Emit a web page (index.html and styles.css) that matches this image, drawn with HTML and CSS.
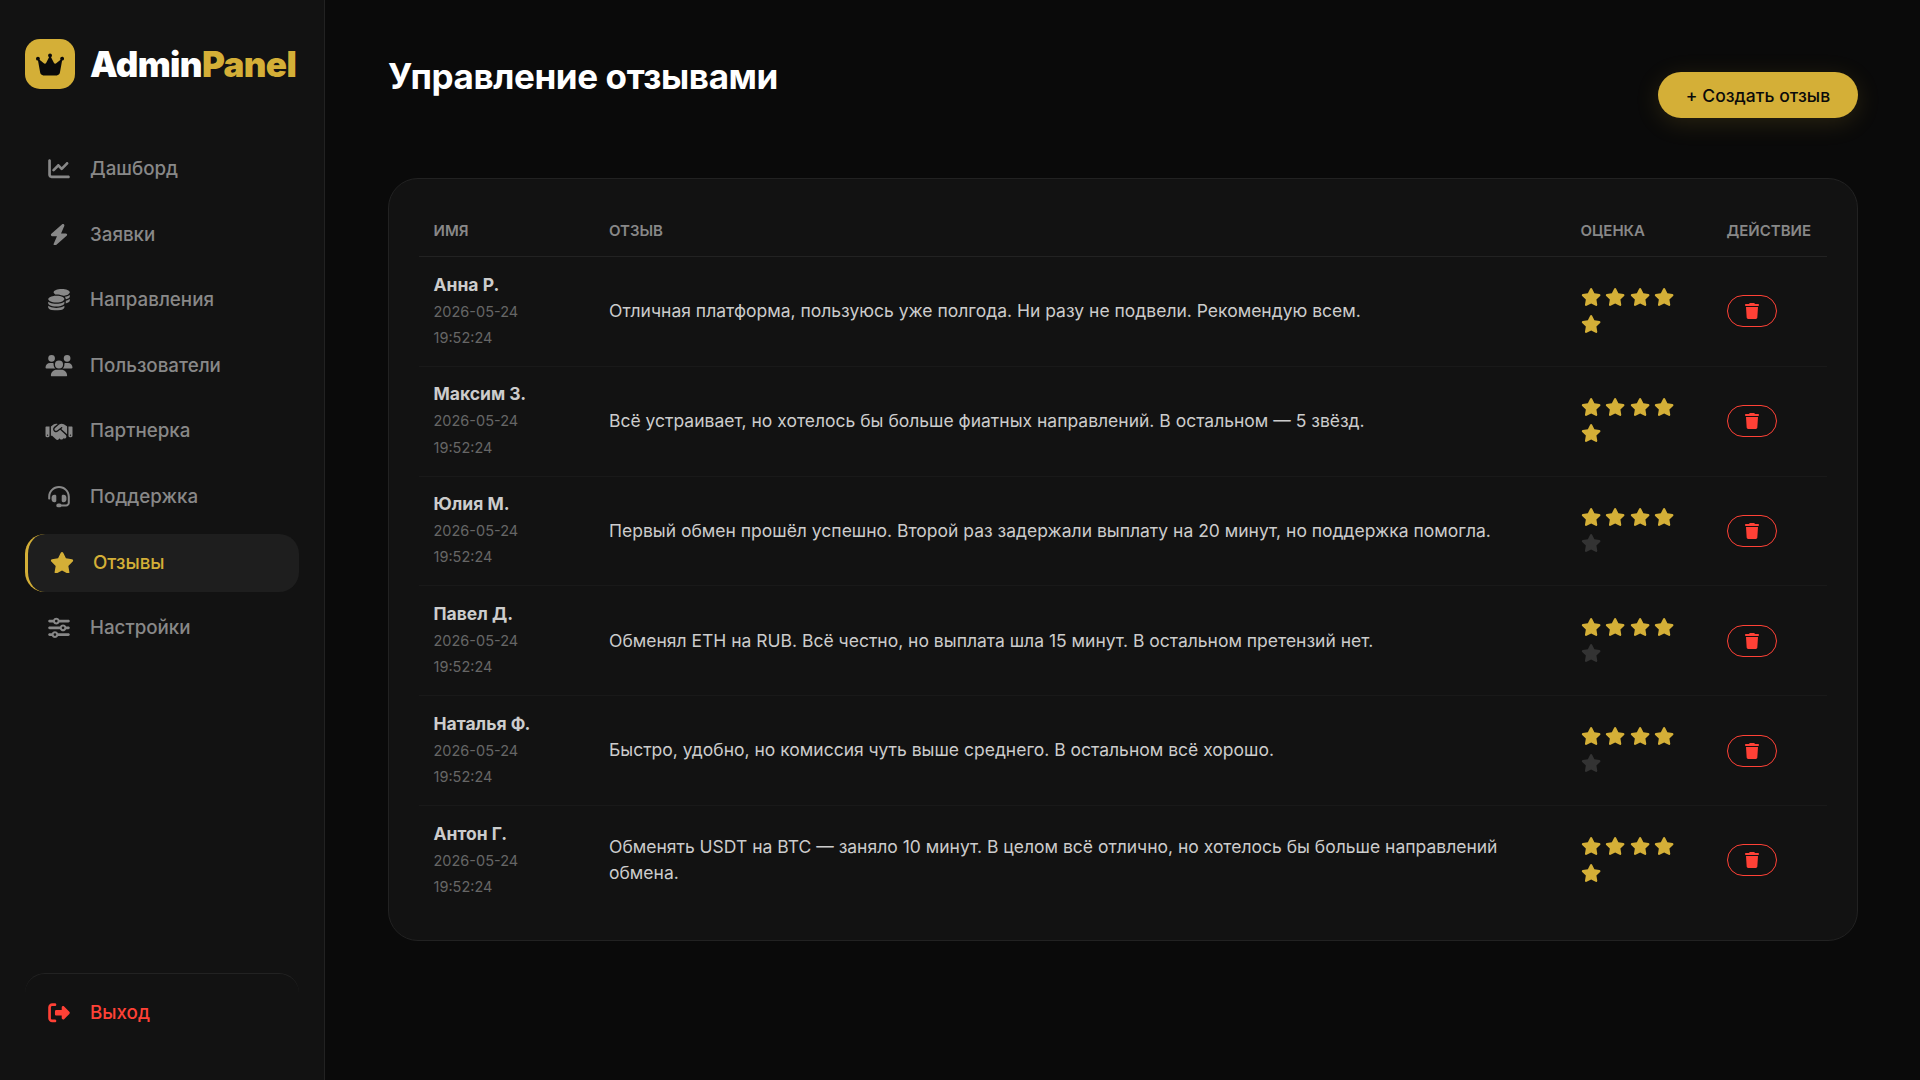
FILE: index.html
```html
<!DOCTYPE html>
<html lang="ru">
<head>
<meta charset="utf-8">
<title>AdminPanel</title>
<link rel="stylesheet" href="styles.css">
</head>
<body>
<svg class="sprite" aria-hidden="true">
  <symbol id="crown" viewBox="0 0 576 512"><path d="M309 106c11.4-7 19-19.7 19-34c0-22.1-17.9-40-40-40s-40 17.9-40 40c0 14.4 7.6 27 19 34L209.7 220.6c-9.1 18.2-32.7 23.4-48.6 10.7L72 160c5-6.7 8-15 8-24c0-22.1-17.9-40-40-40S0 113.9 0 136s17.9 40 40 40c.2 0 .5 0 .7 0L86.4 427.4c5.5 30.4 32 52.6 63 52.6H426.6c30.9 0 57.4-22.1 63-52.6L535.3 176c.2 0 .5 0 .7 0c22.1 0 40-17.9 40-40s-17.9-40-40-40s-40 17.9-40 40c0 9 3 17.3 8 24l-89.1 71.3c-15.9 12.7-39.5 7.5-48.6-10.7L309 106z"/></symbol>
  <symbol id="chart" viewBox="0 0 512 512"><path d="M64 64c0-17.7-14.3-32-32-32S0 46.3 0 64V400c0 44.2 35.8 80 80 80H480c17.7 0 32-14.3 32-32s-14.3-32-32-32H80c-8.8 0-16-7.2-16-16V64zm406.6 86.6c12.5-12.5 12.5-32.8 0-45.3s-32.8-12.5-45.3 0L320 210.7l-57.4-57.4c-12.5-12.5-32.8-12.5-45.3 0l-112 112c-12.5 12.5-12.5 32.8 0 45.3s32.8 12.5 45.3 0L240 221.3l57.4 57.4c12.5 12.5 32.8 12.5 45.3 0l128-128z"/></symbol>
  <symbol id="bolt" viewBox="0 0 448 512"><path d="M349.4 44.6c5.9-13.7 1.5-29.7-10.6-38.5s-28.6-8-39.9 1.8l-256 224c-10 8.8-13.6 22.9-8.9 35.3S50.7 288 64 288H175.5L98.6 467.4c-5.9 13.7-1.5 29.7 10.6 38.5s28.6 8 39.9-1.8l256-224c10-8.8 13.6-22.9 8.9-35.3s-16.6-20.7-30-20.7H272.5L349.4 44.6z"/></symbol>
  <symbol id="coins" viewBox="0 0 512 512"><path d="M512 80c0 18-14.3 34.6-38.4 48c-29.1 16.1-72.5 27.5-122.3 30.9c-3.7-1.8-7.4-3.5-11.3-5C300.6 137.4 248.2 128 192 128c-8.3 0-16.4 .2-24.5 .6l-1.1-.6C142.3 114.6 128 98 128 80c0-44.2 86-80 192-80S512 35.8 512 80zM160.7 161.1c10.2-.7 20.7-1.1 31.3-1.1c62.2 0 117.4 12.3 152.5 31.4C369.3 204.9 384 221.7 384 240c0 4-.7 7.9-2.1 11.7c-4.6 13.2-17 25.3-35 35.5c-.1 .1-.3 .1-.4 .2c-.3 .2-.6 .3-.9 .5c-35 19.4-90.8 32-153.6 32c-59.6 0-112.9-11.3-148.2-29.1c-1.9-.9-3.7-1.9-5.5-2.9C14.3 274.6 0 258 0 240c0-34.8 53.4-64.5 128-75.4c10.5-1.5 21.4-2.7 32.7-3.5zM416 240c0-21.9-10.6-39.9-24.1-53.4c28.3-4.4 54.2-11.4 76.2-20.5c16.3-6.8 31.5-15.2 43.9-25.5V176c0 19.3-16.5 37.1-43.8 50.9c-14.6 7.4-32.4 13.7-52.4 18.5c.1-1.8 .2-3.5 .2-5.3zm-32 96c0 18-14.3 34.6-38.4 48c-1.8 1-3.6 1.9-5.5 2.9C304.9 404.7 251.6 416 192 416c-62.8 0-118.6-12.6-153.6-32C14.3 370.6 0 354 0 336V300.6c12.5 10.3 27.6 18.7 43.9 25.5C83.4 342.6 135.8 352 192 352s108.6-9.4 148.1-25.9c7.8-3.2 15.3-6.9 22.4-10.9c6.1-3.4 11.8-7.2 17.2-11.2c1.5-1.1 2.9-2.3 4.3-3.4V304v5.7V336zm32 0V304 278.1c19-4.2 36.5-9.5 52.1-16c16.3-6.8 31.5-15.2 43.9-25.5V272c0 10.5-5 21-14.9 30.9c-16.3 16.3-45 29.7-81.3 38.4c.1-1.7 .2-3.5 .2-5.3zM192 448c56.2 0 108.6-9.4 148.1-25.9c16.3-6.8 31.5-15.2 43.9-25.5V432c0 44.2-86 80-192 80S0 476.2 0 432V396.6c12.5 10.3 27.6 18.7 43.9 25.5C83.4 438.6 135.8 448 192 448z"/></symbol>
  <symbol id="users" viewBox="0 0 640 512"><path d="M144 0a80 80 0 1 1 0 160A80 80 0 1 1 144 0zM512 0a80 80 0 1 1 0 160A80 80 0 1 1 512 0zM0 298.7C0 239.8 47.8 192 106.7 192h42.7c15.9 0 31 3.5 44.6 9.7c-1.3 7.2-1.9 14.7-1.9 22.3c0 38.2 16.8 72.5 43.3 96c-.2 0-.4 0-.7 0H21.3C9.6 320 0 310.4 0 298.7zM405.3 320c-.2 0-.4 0-.7 0c26.6-23.5 43.3-57.8 43.3-96c0-7.6-.7-15-1.9-22.3c13.6-6.3 28.7-9.7 44.6-9.7h42.7C592.2 192 640 239.8 640 298.7c0 11.8-9.6 21.3-21.3 21.3H405.3zM224 224a96 96 0 1 1 192 0 96 96 0 1 1 -192 0zM128 485.3C128 411.7 187.7 352 261.3 352H378.7C452.3 352 512 411.7 512 485.3c0 14.7-11.9 26.7-26.7 26.7H154.7c-14.7 0-26.7-11.9-26.7-26.7z"/></symbol>
  <symbol id="handshake" viewBox="0 0 640 512"><path d="M323.4 85.2l-96.8 78.4c-16.1 13-19.2 36.4-7 53.1c12.9 17.8 38 21.3 55.3 7.8l99.3-77.2c7-5.4 17-4.2 22.5 2.8s4.2 17-2.8 22.5l-20.9 16.2L512 316.8V128h-.7l-3.9-2.5L434.8 79c-15.3-9.8-33.2-15-51.4-15c-21.8 0-43 7.5-60 21.2zm22.8 124.4l-51.7 40.2C263 274.3 217.3 268 193.7 235.6c-22.2-30.5-16.6-73.1 12.7-96.8l83.2-67.3c-11.6-4.9-24.1-7.4-36.8-7.4C234 64 215.7 69.6 200 80l-72 48V352h28.2l91.4 83.4c19.6 17.9 49.9 16.5 67.8-3.1c5.5-6.1 9.2-13.2 11.1-20.6l17 15.6c19.5 17.9 49.9 16.6 67.8-2.9c4.5-4.9 7.8-10.6 9.9-16.5c19.4 13 45.8 10.3 62.1-7.5c17.9-19.5 16.6-49.9-2.9-67.8l-134.2-123zM16 128c-8.8 0-16 7.2-16 16V352c0 17.7 14.3 32 32 32H64c17.7 0 32-14.3 32-32V128H16zM48 320a16 16 0 1 1 0 32 16 16 0 1 1 0-32zM544 128V352c0 17.7 14.3 32 32 32h32c17.7 0 32-14.3 32-32V144c0-8.8-7.2-16-16-16H544zm32 208a16 16 0 1 1 32 0 16 16 0 1 1 -32 0z"/></symbol>
  <symbol id="headset" viewBox="0 0 512 512"><path d="M256 48C141.1 48 48 141.1 48 256v40c0 13.3-10.7 24-24 24s-24-10.7-24-24V256C0 114.6 114.6 0 256 0S512 114.6 512 256V400.1c0 48.6-39.4 88-88.1 88L313.6 488c-8.3 14.3-23.8 24-41.6 24H240c-26.5 0-48-21.5-48-48s21.5-48 48-48h32c17.8 0 33.3 9.7 41.6 24l110.4 .1c22.1 0 40-17.9 40-40V256c0-114.9-93.1-208-208-208zM144 208h16c17.7 0 32 14.3 32 32V352c0 17.7-14.3 32-32 32H144c-35.3 0-64-28.7-64-64V272c0-35.3 28.7-64 64-64zm224 0c35.3 0 64 28.7 64 64v48c0 35.3-28.7 64-64 64H352c-17.7 0-32-14.3-32-32V240c0-17.7 14.3-32 32-32h16z"/></symbol>
  <symbol id="star" viewBox="0 0 576 512"><path d="M316.9 18C311.6 7 300.4 0 288.1 0s-23.4 7-28.8 18L195 150.3 51.4 171.5c-12 1.8-22 10.2-25.7 21.7s-.7 24.2 7.9 32.7L137.8 329 113.2 474.7c-2 12 3 24.2 12.9 31.3s23 8 33.8 2.3l128.3-68.5 128.3 68.5c10.8 5.7 23.9 4.9 33.8-2.3s14.9-19.3 12.9-31.3L438.5 329 542.7 225.9c8.6-8.5 11.7-21.2 7.9-32.7s-13.7-19.9-25.7-21.7L381.2 150.3 316.9 18z"/></symbol>
  <symbol id="sliders" viewBox="0 0 512 512"><path d="M0 416c0 17.7 14.3 32 32 32l54.7 0c12.3 28.3 40.5 48 73.3 48s61-19.7 73.3-48L480 448c17.7 0 32-14.3 32-32s-14.3-32-32-32l-246.7 0c-12.3-28.3-40.5-48-73.3-48s-61 19.7-73.3 48L32 384c-17.7 0-32 14.3-32 32zm128 0a32 32 0 1 1 64 0 32 32 0 1 1 -64 0zM320 256a32 32 0 1 1 64 0 32 32 0 1 1 -64 0zm32-80c-32.8 0-61 19.7-73.3 48L32 224c-17.7 0-32 14.3-32 32s14.3 32 32 32l246.7 0c12.3 28.3 40.5 48 73.3 48s61-19.7 73.3-48l54.7 0c17.7 0 32-14.3 32-32s-14.3-32-32-32l-54.7 0c-12.3-28.3-40.5-48-73.3-48zM192 128a32 32 0 1 1 0-64 32 32 0 1 1 0 64zm73.3-64C253 35.7 224.8 16 192 16s-61 19.7-73.3 48L32 64C14.3 64 0 78.3 0 96s14.3 32 32 32l86.7 0c12.3 28.3 40.5 48 73.3 48s61-19.7 73.3-48L480 128c17.7 0 32-14.3 32-32s-14.3-32-32-32L265.3 64z"/></symbol>
  <symbol id="logout" viewBox="0 0 512 512"><path d="M377.9 105.9L500.7 228.7c7.2 7.2 11.3 17.1 11.3 27.3s-4.1 20.1-11.3 27.3L377.9 406.1c-6.4 6.4-15 9.9-24 9.9c-18.7 0-33.9-15.2-33.9-33.9l0-62.1-128 0c-17.7 0-32-14.3-32-32l0-64c0-17.7 14.3-32 32-32l128 0 0-62.1c0-18.7 15.2-33.9 33.9-33.9c9 0 17.6 3.6 24 9.9zM160 96L96 96c-17.7 0-32 14.3-32 32l0 256c0 17.7 14.3 32 32 32l64 0c17.7 0 32 14.3 32 32s-14.3 32-32 32l-64 0c-53 0-96-43-96-96L0 128C0 75 43 32 96 32l64 0c17.7 0 32 14.3 32 32s-14.3 32-32 32z"/></symbol>
  <symbol id="trash" viewBox="0 0 448 512"><path d="M135.2 17.7L128 32H32C14.3 32 0 46.3 0 64S14.3 96 32 96H416c17.7 0 32-14.3 32-32s-14.3-32-32-32H320l-7.2-14.3C307.4 6.8 296.3 0 284.2 0H163.8c-12.1 0-23.2 6.8-28.6 17.7zM416 128H32L53.2 467c1.6 25.3 22.6 45 47.9 45H346.9c25.3 0 46.3-19.7 47.9-45L416 128z"/></symbol>
</svg>

<div class="layout">
  <aside class="sidebar">
    <div class="logo">
      <div class="logo-mark"><svg><use href="#crown"/></svg></div>
      <div class="logo-text">Admin<span>Panel</span></div>
    </div>
    <nav class="nav">
      <a class="nav-item"><svg><use href="#chart"/></svg>Дашборд</a>
      <a class="nav-item"><svg><use href="#bolt"/></svg>Заявки</a>
      <a class="nav-item"><svg><use href="#coins"/></svg>Направления</a>
      <a class="nav-item"><svg><use href="#users"/></svg>Пользователи</a>
      <a class="nav-item"><svg><use href="#handshake"/></svg>Партнерка</a>
      <a class="nav-item"><svg><use href="#headset"/></svg>Поддержка</a>
      <a class="nav-item active"><svg><use href="#star"/></svg>Отзывы</a>
      <a class="nav-item"><svg><use href="#sliders"/></svg>Настройки</a>
    </nav>
    <a class="nav-item logout"><svg><use href="#logout"/></svg>Выход</a>
  </aside>

  <main class="main">
    <header class="header">
      <h1>Управление отзывами</h1>
      <button class="btn-create">+ Создать отзыв</button>
    </header>

    <section class="card">
      <table class="reviews">
        <colgroup><col class="c-name"><col class="c-text"><col class="c-rate"><col class="c-act"></colgroup>
        <thead>
          <tr><th>Имя</th><th>Отзыв</th><th>Оценка</th><th>Действие</th></tr>
        </thead>
        <tbody>
          <tr>
            <td><strong>Анна Р.</strong><small>2026-05-24 19:52:24</small></td>
            <td>Отличная платформа, пользуюсь уже полгода. Ни разу не подвели. Рекомендую всем.</td>
            <td><div class="stars"><svg><use href="#star"/></svg><svg><use href="#star"/></svg><svg><use href="#star"/></svg><svg><use href="#star"/></svg><svg><use href="#star"/></svg></div></td>
            <td><button class="btn-del"><svg><use href="#trash"/></svg></button></td>
          </tr>
          <tr>
            <td><strong>Максим З.</strong><small>2026-05-24 19:52:24</small></td>
            <td>Всё устраивает, но хотелось бы больше фиатных направлений. В остальном — 5 звёзд.</td>
            <td><div class="stars"><svg><use href="#star"/></svg><svg><use href="#star"/></svg><svg><use href="#star"/></svg><svg><use href="#star"/></svg><svg><use href="#star"/></svg></div></td>
            <td><button class="btn-del"><svg><use href="#trash"/></svg></button></td>
          </tr>
          <tr>
            <td><strong>Юлия М.</strong><small>2026-05-24 19:52:24</small></td>
            <td>Первый обмен прошёл успешно. Второй раз задержали выплату на 20 минут, но поддержка помогла.</td>
            <td><div class="stars"><svg><use href="#star"/></svg><svg><use href="#star"/></svg><svg><use href="#star"/></svg><svg><use href="#star"/></svg><svg class="off"><use href="#star"/></svg></div></td>
            <td><button class="btn-del"><svg><use href="#trash"/></svg></button></td>
          </tr>
          <tr>
            <td><strong>Павел Д.</strong><small>2026-05-24 19:52:24</small></td>
            <td>Обменял ETH на RUB. Всё честно, но выплата шла 15 минут. В остальном претензий нет.</td>
            <td><div class="stars"><svg><use href="#star"/></svg><svg><use href="#star"/></svg><svg><use href="#star"/></svg><svg><use href="#star"/></svg><svg class="off"><use href="#star"/></svg></div></td>
            <td><button class="btn-del"><svg><use href="#trash"/></svg></button></td>
          </tr>
          <tr>
            <td><strong>Наталья Ф.</strong><small>2026-05-24 19:52:24</small></td>
            <td>Быстро, удобно, но комиссия чуть выше среднего. В остальном всё хорошо.</td>
            <td><div class="stars"><svg><use href="#star"/></svg><svg><use href="#star"/></svg><svg><use href="#star"/></svg><svg><use href="#star"/></svg><svg class="off"><use href="#star"/></svg></div></td>
            <td><button class="btn-del"><svg><use href="#trash"/></svg></button></td>
          </tr>
          <tr>
            <td><strong>Антон Г.</strong><small>2026-05-24 19:52:24</small></td>
            <td>Обменять USDT на BTC — заняло 10 минут. В целом всё отлично, но хотелось бы больше направлений обмена.</td>
            <td><div class="stars"><svg><use href="#star"/></svg><svg><use href="#star"/></svg><svg><use href="#star"/></svg><svg><use href="#star"/></svg><svg><use href="#star"/></svg></div></td>
            <td><button class="btn-del"><svg><use href="#trash"/></svg></button></td>
          </tr>
        </tbody>
      </table>
    </section>
  </main>
</div>
</body>
</html>
```
FILE: styles.css
```css
* { box-sizing: border-box; margin: 0; padding: 0; }

body {
  background: #0a0a0a;
  color: #fff;
  font-family: Inter, "Liberation Sans", sans-serif;
  font-size: 17.5px;
  line-height: 1.5;
}

svg { fill: currentColor; flex-shrink: 0; }
.sprite { display: none; }

.layout { display: flex; height: 100vh; overflow: hidden; }

/* Sidebar */
.sidebar {
  display: flex;
  flex-direction: column;
  width: 325px;
  flex-shrink: 0;
  padding: 36px 25px 35px;
  background: #121212;
  border-right: 1px solid #222;
}

.logo {
  display: flex;
  align-items: center;
  gap: 15px;
  height: 56px;
  margin-bottom: 48px;
}

.logo-mark {
  display: flex;
  align-items: center;
  justify-content: center;
  width: 50px;
  height: 50px;
  border-radius: 15px;
  background: #d4af37;
  color: #0a0a0a;
}
.logo-mark svg { width: 28.1px; height: 25px; }

.logo-text {
  font-size: 35px;
  font-weight: 900;
  letter-spacing: -0.625px;
  white-space: nowrap;
}
.logo-text span { color: #d4af37; }

.nav { display: flex; flex-direction: column; gap: 7.5px; flex: 1; }

.nav-item {
  display: flex;
  align-items: center;
  gap: 16px;
  height: 58.1px;
  padding: 0 19px;
  border-radius: 20px;
  color: #888;
  font-size: 18.75px;
  font-weight: 500;
}
.nav-item svg { width: 30px; height: 21.6px; }
.nav-item.active {
  background: #1e1e1e;
  border-left: 3px solid #d4af37;
  color: #d4af37;
}
.nav-item.logout {
  height: 72px;
  padding-top: 7px;
  border-top: 1px solid #222;
  color: #ff4136;
}

/* Content */
.main { flex: 1; padding: 49px 62px 0 63px; }

.header {
  display: flex;
  justify-content: space-between;
  align-items: flex-start;
  height: 129px;
}
.header h1 {
  font-size: 35px;
  font-weight: 700;
  letter-spacing: -0.4px;
  line-height: 54px;
}

.btn-create {
  width: 200px;
  height: 46px;
  margin-top: 23px;
  padding-top: 1px;
  border: 0;
  border-radius: 23px;
  background: #d4af37;
  box-shadow: 0 5px 25px rgba(212, 175, 55, 0.15);
  color: #0a0a0a;
  font: 500 17.5px/1 Inter, sans-serif;
  letter-spacing: 0.05px;
}

.card {
  padding: 25px 30px;
  border: 1px solid #222;
  border-radius: 30px;
  background: #121212;
}

.reviews { width: 100%; table-layout: fixed; border-collapse: separate; border-spacing: 0; }
.c-name { width: 175.5px; }
.c-rate { width: 146px; }
.c-act { width: 115px; }

.reviews th {
  height: 53px;
  padding: 3px 15px 0 14.5px;
  border-bottom: 1px solid #222;
  color: #888;
  font-size: 15px;
  font-weight: 600;
  text-align: left;
  text-transform: uppercase;
}

.reviews td {
  height: 109.8px;
  padding: 0 15px 0 14.5px;
  border-bottom: 1px solid #191919;
  color: #ccc;
  line-height: 26.35px;
  vertical-align: middle;
}
.reviews tr:last-child td { height: 109px; border-bottom: 0; }
.reviews strong { display: block; height: 27px; font-weight: 700; }
.reviews small { display: block; width: 100px; color: #666; font-size: 14.5px; }

.stars {
  display: flex;
  flex-wrap: wrap;
  gap: 8.35px 4.4px;
  padding-bottom: 2px;
  color: #d4af37;
}
.stars svg { width: 20.25px; height: 18px; }
.stars .off { color: #333; }

.btn-del {
  display: flex;
  align-items: center;
  justify-content: center;
  width: 50px;
  height: 32px;
  border: 1px solid #ff4136;
  border-radius: 16px;
  background: transparent;
  color: #ff4136;
}
.btn-del svg { width: 14px; height: 16px; }
```
